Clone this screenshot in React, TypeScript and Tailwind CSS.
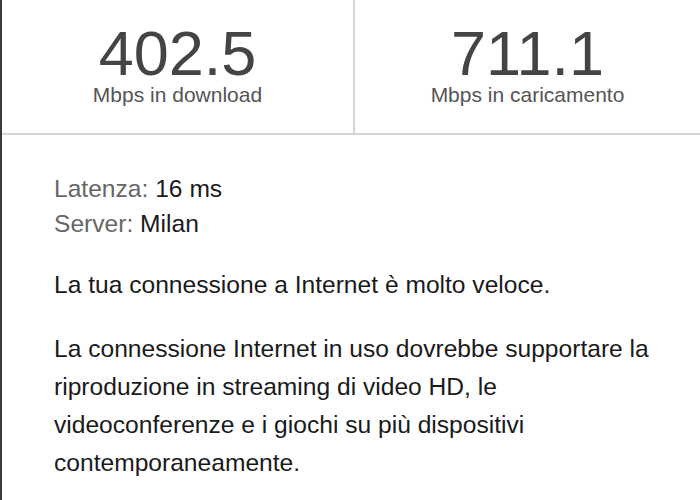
export default function App() {
  return (
    <div
      className="w-[700px] h-[500px] bg-white border-l-2 border-[#3a3a3a] overflow-hidden"
      style={{ fontFamily: '"Liberation Sans", Arial, sans-serif' }}
    >
      <div className="flex h-[135px] border-b-2 border-[#d6d6d6]">
        <div className="w-[353px] border-r-2 border-[#d6d6d6] flex flex-col items-center pt-[24px]">
          <div className="text-[63px] leading-[58px] text-[#444]">402.5</div>
          <div className="text-[21px] leading-[24px] text-[#555] mt-[1px]">Mbps in download</div>
        </div>
        <div className="flex-1 flex flex-col items-center pt-[24px]">
          <div className="text-[63px] leading-[58px] text-[#444]">711.1</div>
          <div className="text-[21px] leading-[24px] text-[#555] mt-[1px]">Mbps in caricamento</div>
        </div>
      </div>
      <div className="pl-[52px] pt-[36px] text-[24.6px] text-[#1a1a1a]">
        <div className="leading-[35px]">
          <span className="text-[#666]">Latenza:</span> 16 ms
        </div>
        <div className="leading-[35px]">
          <span className="text-[#666]">Server:</span> Milan
        </div>
        <p className="leading-[38px] mt-[25px]">La tua connessione a Internet è molto veloce.</p>
        <p className="leading-[38px] mt-[26px] w-[612px]">
          La connessione Internet in uso dovrebbe supportare la riproduzione in streaming di video HD, le
          videoconferenze e i giochi su più dispositivi contemporaneamente.
        </p>
      </div>
    </div>
  );
}
